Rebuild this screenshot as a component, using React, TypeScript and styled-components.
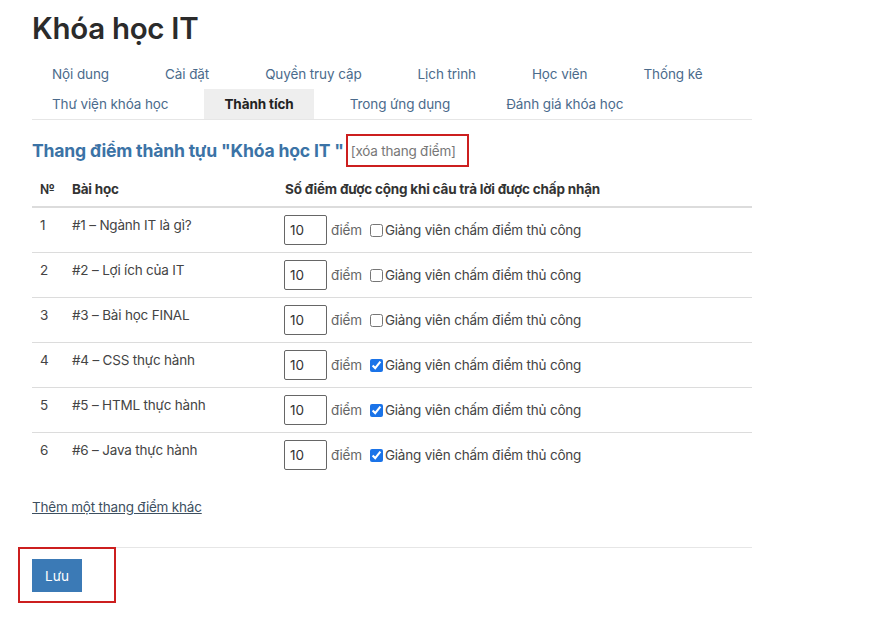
import React, { useState } from "react";
import styled, { createGlobalStyle } from "styled-components";

const GlobalStyle = createGlobalStyle`
  body {
    margin: 0;
    background: #fff;
    font-family: Inter, "Noto Sans", sans-serif;
    color: #333;
  }
`;

const Page = styled.div`
  width: 720px;
  padding: 0 0 0 32px;
`;

const Title = styled.h1`
  margin: 0;
  padding-top: 9px;
  font-size: 29.5px;
  font-weight: 600;
  letter-spacing: -0.3px;
  color: #2b2b2b;
  line-height: 38px;
`;

const Tabs = styled.ul`
  list-style: none;
  margin: 12px 0 0;
  padding: 0;
  display: flex;
  flex-wrap: wrap;
  column-gap: 16px;
  border-bottom: 1px solid #e6e6e6;
`;

const Tab = styled.li<{ $active?: boolean }>`
  height: 30px;
  line-height: 30px;
  padding: 0 20px;
  font-size: 13.5px;
  letter-spacing: -0.1px;
  color: ${({ $active }) => ($active ? "#222" : "#4b6b8c")};
  font-weight: ${({ $active }) => ($active ? 700 : 400)};
  background: ${({ $active }) => ($active ? "#eeeeee" : "transparent")};
`;

const HeadingRow = styled.div`
  display: flex;
  align-items: center;
  margin-top: 14px;
`;

const Heading = styled.h2`
  margin: 0;
  font-size: 17.6px;
  font-weight: 700;
  color: #3b73a6;
  letter-spacing: -0.2px;
`;

const Marked = styled.span`
  border: 2px solid #cc1f1f;
  padding: 4px 11px 5px 3px;
  margin-left: 2px;
`;

const DeleteLink = styled.span`
  font-size: 13.5px;
  color: #777;
  letter-spacing: -0.2px;
`;

const Table = styled.table`
  width: 100%;
  border-collapse: collapse;
  margin-top: 3px;
  font-size: 13.5px;
  letter-spacing: -0.2px;
`;

const Th = styled.th`
  text-align: left;
  font-weight: 700;
  color: #333;
  padding: 11px 8px 9px;
  border-bottom: 2px solid #dcdcdc;
`;

const Tr = styled.tr<{ $last?: boolean }>`
  border-bottom: ${({ $last }) => ($last ? "none" : "1px solid #dcdcdc")};
`;

const Td = styled.td`
  vertical-align: top;
  padding: 9px 8px 0;
  height: 35px;
  color: #444;
`;

const PointsCell = styled.td`
  padding: 7px 8px 0 7px;
  vertical-align: top;
  height: 37px;
`;

const Points = styled.div`
  display: flex;
  align-items: center;
  gap: 4px;
  color: #666;
`;

const NumInput = styled.input`
  width: 43px;
  height: 30px;
  box-sizing: border-box;
  border: 1px solid #666;
  border-radius: 2px;
  padding: 0 0 0 5px;
  font: inherit;
  font-size: 13.5px;
  color: #333;
`;

const Check = styled.label`
  display: inline-flex;
  align-items: center;
  gap: 2px;
  margin-left: 4px;
  color: #444;
  input {
    margin: 0;
    width: 13px;
    height: 13px;
    accent-color: #1a73e8;
  }
`;

const AddLink = styled.a`
  display: inline-block;
  margin-top: 22px;
  font-size: 13.5px;
  letter-spacing: -0.2px;
  color: #3d4f5f;
  text-decoration: underline;
`;

const Footer = styled.div`
  margin-top: 31px;
  border-top: 1px solid #e6e6e6;
`;

const SaveBox = styled.div`
  display: inline-block;
  margin: -1px 0 0 -14px;
  border: 2px solid #cc1f1f;
  padding: 10px 32px 9px 12px;
`;

const SaveButton = styled.button`
  width: 50px;
  height: 33px;
  border: none;
  background: #3b7ab6;
  color: #fff;
  font: inherit;
  font-size: 13.5px;
  cursor: pointer;
`;

const rows = [
  { n: 1, title: "#1 – Ngành IT là gì?", manual: false },
  { n: 2, title: "#2 – Lợi ích của IT", manual: false },
  { n: 3, title: "#3 – Bài học FINAL", manual: false },
  { n: 4, title: "#4 – CSS thực hành", manual: true },
  { n: 5, title: "#5 – HTML thực hành", manual: true },
  { n: 6, title: "#6 – Java thực hành", manual: true },
];

export default function App() {
  const [data, setData] = useState(rows.map((r) => ({ ...r, points: "10" })));

  const update = (i: number, patch: Partial<(typeof data)[number]>) =>
    setData((d) => d.map((r, j) => (j === i ? { ...r, ...patch } : r)));

  return (
    <Page>
      <GlobalStyle />
      <Title>Khóa học IT</Title>
      <Tabs>
        <Tab>Nội dung</Tab>
        <Tab>Cài đặt</Tab>
        <Tab>Quyền truy cập</Tab>
        <Tab>Lịch trình</Tab>
        <Tab>Học viên</Tab>
        <Tab>Thống kê</Tab>
        <Tab>Thư viện khóa học</Tab>
        <Tab $active>Thành tích</Tab>
        <Tab>Trong ứng dụng</Tab>
        <Tab>Đánh giá khóa học</Tab>
      </Tabs>

      <HeadingRow>
        <Heading>Thang điểm thành tựu "Khóa học IT "</Heading>
        <Marked>
          <DeleteLink>[xóa thang điểm]</DeleteLink>
        </Marked>
      </HeadingRow>

      <Table>
        <thead>
          <tr>
            <Th style={{ width: 16 }}>№</Th>
            <Th style={{ width: 197 }}>Bài học</Th>
            <Th>Số điểm được cộng khi câu trả lời được chấp nhận</Th>
          </tr>
        </thead>
        <tbody>
          {data.map((r, i) => (
            <Tr key={r.n} $last={i === data.length - 1}>
              <Td>{r.n}</Td>
              <Td>{r.title}</Td>
              <PointsCell>
                <Points>
                  <NumInput
                    value={r.points}
                    onChange={(e) => update(i, { points: e.target.value })}
                  />
                  <span>điểm</span>
                  <Check>
                    <input
                      type="checkbox"
                      checked={r.manual}
                      onChange={(e) => update(i, { manual: e.target.checked })}
                    />
                    Giảng viên chấm điểm thủ công
                  </Check>
                </Points>
              </PointsCell>
            </Tr>
          ))}
        </tbody>
      </Table>

      <AddLink href="#">Thêm một thang điểm khác</AddLink>

      <Footer>
        <SaveBox>
          <SaveButton>Lưu</SaveButton>
        </SaveBox>
      </Footer>
    </Page>
  );
}
